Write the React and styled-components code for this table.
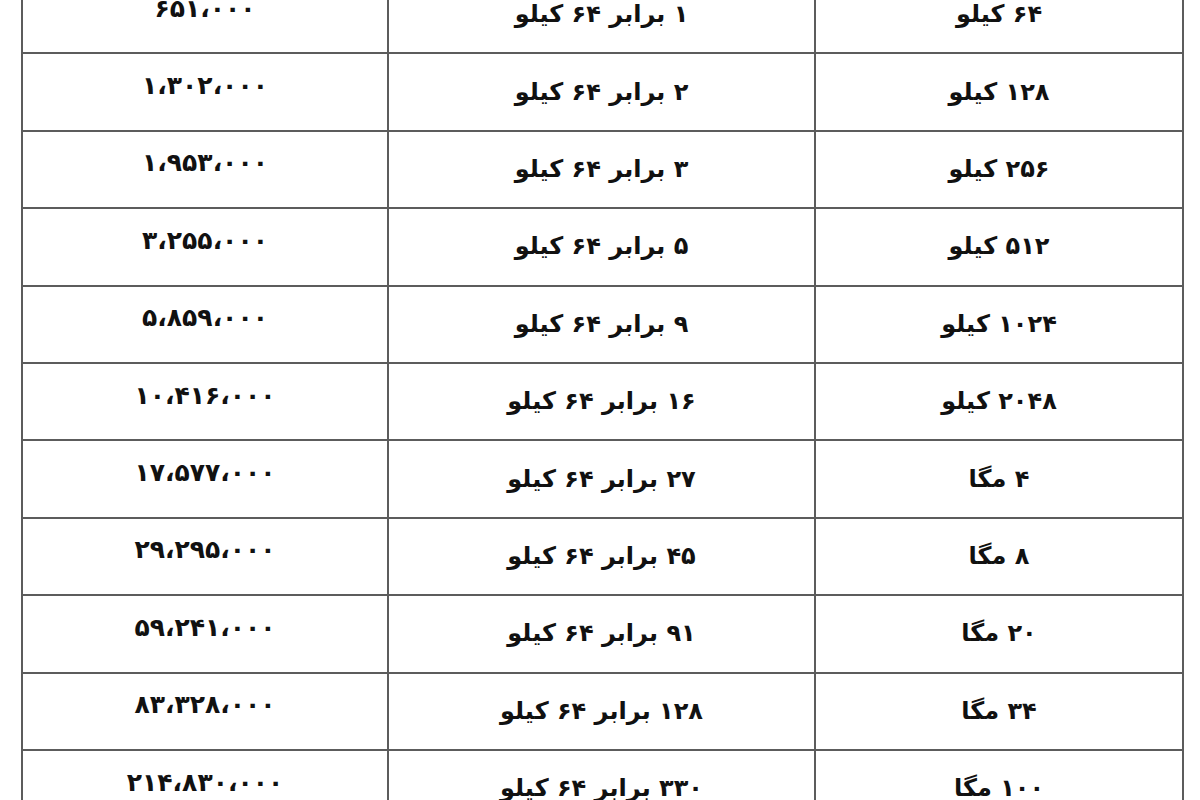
import React from "react";
import styled, { createGlobalStyle } from "styled-components";

const GlobalStyle = createGlobalStyle`
  html, body {
    margin: 0;
    padding: 0;
    background: #ffffff;
    overflow: hidden;
  }
  body {
    font-family: "DejaVu Sans", "Noto Sans", sans-serif;
  }
`;

const Page = styled.div`
  width: 1200px;
  height: 800px;
  overflow: hidden;
  background: #ffffff;
`;

const Table = styled.div`
  direction: rtl;
  display: grid;
  grid-template-columns: 366px 425px 364px;
  grid-auto-rows: 75.4px;
  gap: 2px;
  padding: 2px;
  width: max-content;
  margin: -25px 0 0 21px;
  background: #5c5c5c;
`;

const Cell = styled.div`
  background: #ffffff;
  display: flex;
  align-items: center;
  justify-content: center;
  font-family: "DejaVu Sans", "Noto Sans", sans-serif;
  font-weight: 700;
  font-size: ${(p) => (p.$num ? "25px" : "24px")};
  color: #111111;
  padding-bottom: ${(p) => (p.$num ? "13px" : "1px")};
`;

const rows = [
  ["۶۴ کیلو", "۱ برابر ۶۴ کیلو", "۶۵۱،۰۰۰"],
  ["۱۲۸ کیلو", "۲ برابر ۶۴ کیلو", "۱،۳۰۲،۰۰۰"],
  ["۲۵۶ کیلو", "۳ برابر ۶۴ کیلو", "۱،۹۵۳،۰۰۰"],
  ["۵۱۲ کیلو", "۵ برابر ۶۴ کیلو", "۳،۲۵۵،۰۰۰"],
  ["۱۰۲۴ کیلو", "۹ برابر ۶۴ کیلو", "۵،۸۵۹،۰۰۰"],
  ["۲۰۴۸ کیلو", "۱۶ برابر ۶۴ کیلو", "۱۰،۴۱۶،۰۰۰"],
  ["۴ مگا", "۲۷ برابر ۶۴ کیلو", "۱۷،۵۷۷،۰۰۰"],
  ["۸ مگا", "۴۵ برابر ۶۴ کیلو", "۲۹،۲۹۵،۰۰۰"],
  ["۲۰ مگا", "۹۱ برابر ۶۴ کیلو", "۵۹،۲۴۱،۰۰۰"],
  ["۳۴ مگا", "۱۲۸ برابر ۶۴ کیلو", "۸۳،۳۲۸،۰۰۰"],
  ["۱۰۰ مگا", "۳۳۰ برابر ۶۴ کیلو", "۲۱۴،۸۳۰،۰۰۰"],
];

export default function App() {
  return (
    <Page>
      <GlobalStyle />
      <Table>
        {rows.map((r, i) => (
          <React.Fragment key={i}>
            <Cell>{r[0]}</Cell>
            <Cell>{r[1]}</Cell>
            <Cell $num>{r[2]}</Cell>
          </React.Fragment>
        ))}
      </Table>
    </Page>
  );
}
